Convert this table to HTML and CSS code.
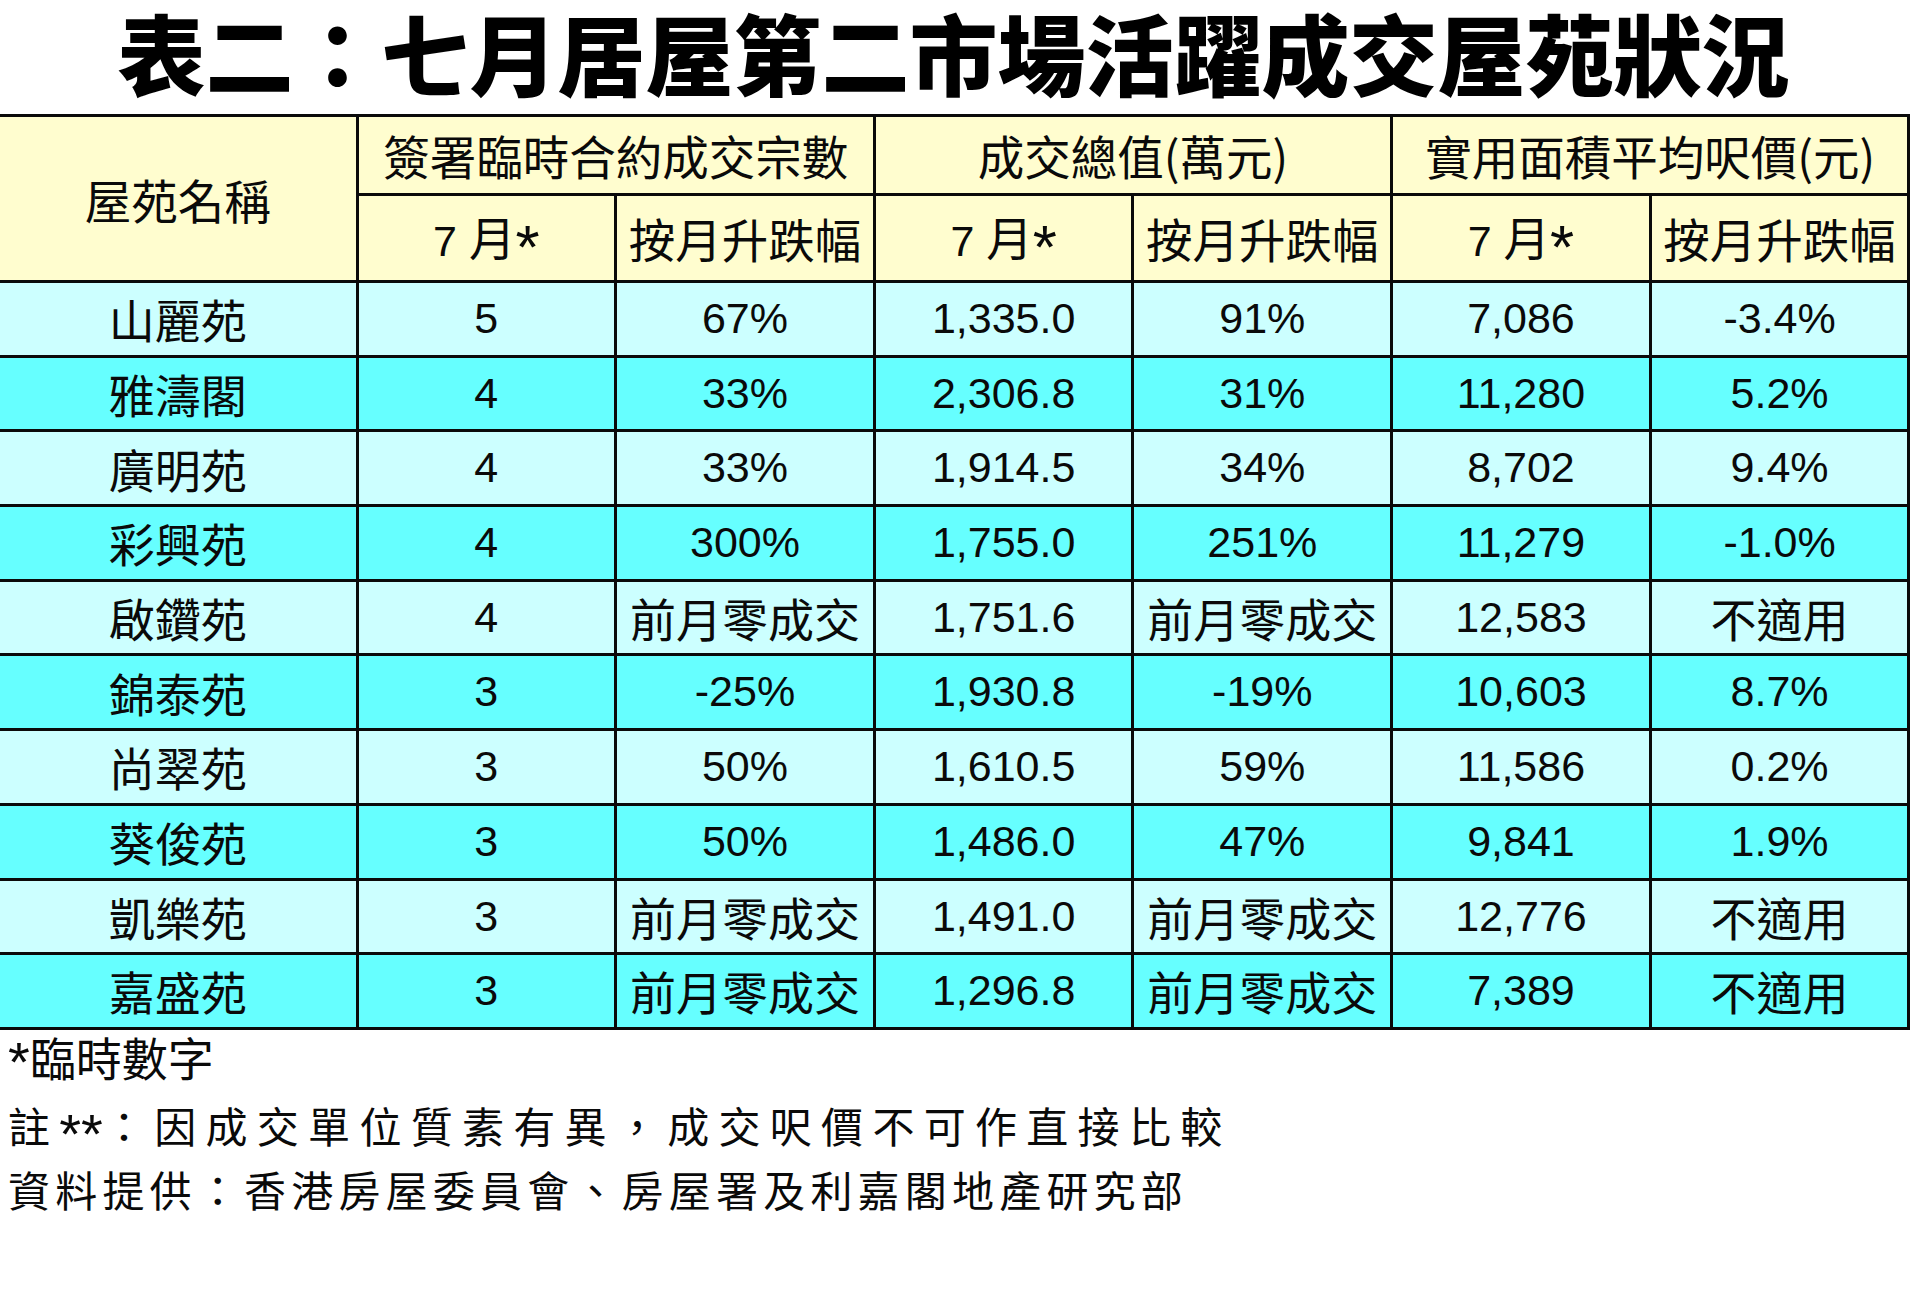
FILE: index.html
```html
<!DOCTYPE html>
<html lang="zh-Hant">
<head>
<meta charset="utf-8">
<title>表二：七月居屋第二市場活躍成交屋苑狀況</title>
<link rel="stylesheet" href="styles.css">
</head>
<body>
<div class="page">
  <h1 class="title">表二：七月居屋第二市場活躍成交屋苑狀況</h1>
  <table class="grid">
    <colgroup>
      <col class="c-name">
      <col class="c-val"><col class="c-val"><col class="c-val">
      <col class="c-val"><col class="c-val"><col class="c-val">
    </colgroup>
    <thead>
      <tr class="h1">
        <th rowspan="2" class="first">屋苑名稱</th>
        <th colspan="2">簽署臨時合約成交宗數</th>
        <th colspan="2">成交總值(萬元)</th>
        <th colspan="2">實用面積平均呎價(元)</th>
      </tr>
      <tr class="h2">
        <th><span class="num">7 </span>月<span class="ast-h">*</span></th>
        <th>按月升跌幅</th>
        <th><span class="num">7 </span>月<span class="ast-h">*</span></th>
        <th>按月升跌幅</th>
        <th><span class="num">7 </span>月<span class="ast-h">*</span></th>
        <th>按月升跌幅</th>
      </tr>
    </thead>
    <tbody>
      <tr class="odd"><td class="first t">山麗苑</td><td>5</td><td>67%</td><td>1,335.0</td><td>91%</td><td>7,086</td><td>-3.4%</td></tr>
      <tr class="even"><td class="first t">雅濤閣</td><td>4</td><td>33%</td><td>2,306.8</td><td>31%</td><td>11,280</td><td>5.2%</td></tr>
      <tr class="odd"><td class="first t">廣明苑</td><td>4</td><td>33%</td><td>1,914.5</td><td>34%</td><td>8,702</td><td>9.4%</td></tr>
      <tr class="even"><td class="first t">彩興苑</td><td>4</td><td>300%</td><td>1,755.0</td><td>251%</td><td>11,279</td><td>-1.0%</td></tr>
      <tr class="odd"><td class="first t">啟鑽苑</td><td>4</td><td class="t">前月零成交</td><td>1,751.6</td><td class="t">前月零成交</td><td>12,583</td><td class="t">不適用</td></tr>
      <tr class="even"><td class="first t">錦泰苑</td><td>3</td><td>-25%</td><td>1,930.8</td><td>-19%</td><td>10,603</td><td>8.7%</td></tr>
      <tr class="odd"><td class="first t">尚翠苑</td><td>3</td><td>50%</td><td>1,610.5</td><td>59%</td><td>11,586</td><td>0.2%</td></tr>
      <tr class="even"><td class="first t">葵俊苑</td><td>3</td><td>50%</td><td>1,486.0</td><td>47%</td><td>9,841</td><td>1.9%</td></tr>
      <tr class="odd"><td class="first t">凱樂苑</td><td>3</td><td class="t">前月零成交</td><td>1,491.0</td><td class="t">前月零成交</td><td>12,776</td><td class="t">不適用</td></tr>
      <tr class="even"><td class="first t">嘉盛苑</td><td>3</td><td class="t">前月零成交</td><td>1,296.8</td><td class="t">前月零成交</td><td>7,389</td><td class="t">不適用</td></tr>
    </tbody>
  </table>
  <div class="notes">
    <p class="note n1"><span class="ast ast1">*</span>臨時數字</p>
    <p class="note n2">註<span class="ast ast2">**</span>：因成交單位質素有異，成交呎價不可作直接比較</p>
    <p class="note n3">資料提供：香港房屋委員會、房屋署及利嘉閣地產研究部</p>
  </div>
</div>
</body>
</html>
```

FILE: styles.css
```css
html, body {
  margin: 0;
  padding: 0;
  background: #ffffff;
}

.page {
  width: 1915px;
  height: 1301px;
  overflow: hidden;
  color: #0a0a0a;
  font-family: "Noto Sans CJK TC", "Noto Sans CJK SC", sans-serif;
}

.title {
  margin: 0 0 12px 0;
  padding: 0 8px 0 0;
  height: 102px;
  text-align: center;
  font-family: "Noto Sans CJK TC", "Noto Sans CJK SC", sans-serif;
  font-weight: 900;
  font-size: 88px;
  line-height: 102px;
  color: #000000;
  white-space: nowrap;
}

.grid {
  border-collapse: collapse;
  table-layout: fixed;
  width: 1909px;
  border: 3px solid #0a0a0a;
  border-left: none;
}

.c-name { width: 357px; }
.c-val { width: 258.67px; }

.grid th,
.grid td {
  border: 3px solid #0a0a0a;
  padding: 0;
  text-align: center;
  vertical-align: middle;
  white-space: nowrap;
  font-weight: 400;
  color: #0a0a0a;
}

.grid .first {
  border-left: none;
}

.grid th {
  background: #fffdcf;
  font-family: "Noto Sans CJK TC", "Noto Sans CJK SC", sans-serif;
  font-size: 46.5px;
  line-height: 1.2;
}

.grid th .num {
  font-family: "Liberation Sans", sans-serif;
  font-size: 43px;
}

.grid th .ast-h {
  font-family: "Liberation Sans", sans-serif;
  font-size: 62px;
  line-height: 0;
  vertical-align: -12px;
}

.h1 { height: 79px; }
.h2 { height: 87px; }

.grid td {
  font-family: "Liberation Sans", "Noto Sans CJK TC", sans-serif;
  font-size: 43px;
  line-height: 1.2;
}

.grid td.t {
  font-family: "Noto Sans CJK TC", "Noto Sans CJK SC", sans-serif;
  font-size: 46px;
}

.grid tbody tr { height: 74.7px; }

.odd td { background: #ccffff; }
.even td { background: #66ffff; }

.notes {
  padding-left: 8px;
}

.note {
  margin: 0;
  white-space: nowrap;
  color: #0a0a0a;
  font-family: "Noto Sans CJK TC", "Noto Sans CJK SC", sans-serif;
}

.ast {
  font-family: "Liberation Sans", sans-serif;
  font-size: 56px;
  line-height: 0;
  letter-spacing: 0;
}

.ast1 { vertical-align: -5px; }
.ast2 { vertical-align: -10px; }

.n1 {
  font-size: 46px;
  line-height: 52px;
}

.n2 {
  margin-top: 11px;
  font-size: 42px;
  line-height: 64px;
  letter-spacing: 9.3px;
}

.n3 {
  margin-top: 0;
  font-size: 42px;
  line-height: 64px;
  letter-spacing: 5.2px;
}
```
